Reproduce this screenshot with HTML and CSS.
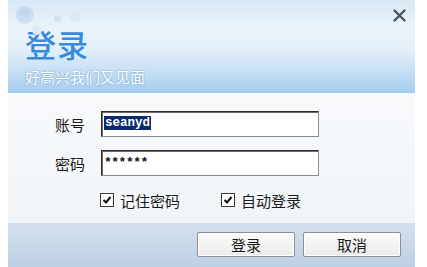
FILE: index.html
```html
<!DOCTYPE html>
<html>
<head>
<meta charset="utf-8">
<link rel="stylesheet" href="styles.css">
</head>
<body>
<div class="window">
  <div class="header">
    <span class="bubble b1"></span>
    <span class="bubble b2"></span>
    <span class="bubble b3"></span>
    <span class="bubble b4"></span>
    <div class="close">
      <svg width="13" height="13" viewBox="0 0 13 13"><path d="M1.5 1.5 L11.5 11.5 M11.5 1.5 L1.5 11.5" stroke="#4a5560" stroke-width="2.4" stroke-linecap="round"/></svg>
    </div>
    <div class="title">登录</div>
    <div class="subtitle">好高兴我们又见面</div>
  </div>
  <div class="body">
    <div class="row">
      <span class="label">账号</span>
      <div class="input"><span class="sel">seanyd</span></div>
    </div>
    <div class="row row2">
      <span class="label">密码</span>
      <div class="input"><span class="pw">******</span></div>
    </div>
    <div class="checks">
      <label class="check"><span class="box"><svg width="12" height="12" viewBox="0 0 12 12"><path d="M2.5 6 L5 8.5 L9.5 3" stroke="#111" stroke-width="2" fill="none"/></svg></span>记住密码</label>
      <label class="check c2"><span class="box"><svg width="12" height="12" viewBox="0 0 12 12"><path d="M2.5 6 L5 8.5 L9.5 3" stroke="#111" stroke-width="2" fill="none"/></svg></span>自动登录</label>
    </div>
  </div>
  <div class="footer">
    <button class="btn">登录</button>
    <button class="btn">取消</button>
  </div>
</div>
</body>
</html>
```

FILE: styles.css
```css
html, body {
  margin: 0;
  padding: 0;
  background: #ffffff;
  height: 267px;
  overflow: hidden;
}
body {
  font-family: "Noto Sans CJK SC", "Liberation Sans", sans-serif;
}
.window {
  margin-left: 8px;
  width: 407px;
  height: 267px;
  display: flex;
  flex-direction: column;
  background: #f4f6f9;
}
.header {
  position: relative;
  height: 93px;
  padding-left: 17px;
  box-sizing: border-box;
  background: linear-gradient(to bottom, #d9e9f6 0%, #eaf3fa 30%, #e6f1fa 50%, #c9e1f5 75%, #a4ccee 100%);
  overflow: hidden;
}
.bubble {
  position: absolute;
  border-radius: 50%;
}
.b1 { left: 8px; top: 6px; width: 18px; height: 18px; background: radial-gradient(circle at 50% 30%, #bcd3ee, #d8e6f5); }
.b2 { left: 46px; top: 15px; width: 7px; height: 7px; background: #d2e2f2; }
.b3 { left: 62px; top: 12px; width: 10px; height: 10px; background: #dbe8f5; }
.b4 { left: 24px; top: 25px; width: 10px; height: 10px; background: #dfeaf6; }
.close {
  position: absolute;
  right: 9px;
  top: 9px;
  width: 13px;
  height: 13px;
}
.close svg { display: block; }
.title {
  margin-top: 24px;
  font-size: 31px;
  font-weight: 500;
  line-height: 40px;
  height: 40px;
  color: #378bdc;
  letter-spacing: 1px;
}
.subtitle {
  margin-top: 4px;
  font-size: 15px;
  line-height: 18px;
  color: #ffffff;
  text-shadow: 0 0 2px #7faad4, 0 0 1px #6f9fcf;
}
.body {
  flex: 1;
  padding-top: 18px;
  box-sizing: border-box;
  background: linear-gradient(to bottom, #f7f9fb, #f2f5f8);
}
.row {
  display: flex;
  align-items: center;
  height: 26px;
}
.row2 { margin-top: 13px; }
.label {
  width: 46px;
  padding-left: 47px;
  font-size: 15px;
  color: #1a1a1a;
}
.input {
  width: 218px;
  height: 26px;
  box-sizing: border-box;
  border: 1px solid #2b2b2b;
  border-right-color: #8a8a8a;
  border-bottom-color: #8a8a8a;
  box-shadow: inset 1px 1px 0 #6b6b6b;
  background: #fff;
  display: flex;
  align-items: center;
  padding-left: 2px;
}
.sel {
  background: #0c2a6e;
  color: #fff;
  font-family: "Liberation Mono", monospace;
  font-weight: bold;
  font-size: 12.5px;
  line-height: 14px;
  padding: 0 1px;
  margin-top: -3px;
}
.pw {
  font-family: "Liberation Mono", monospace;
  font-size: 13px;
  font-weight: bold;
  color: #111;
  letter-spacing: -0.5px;
  margin-top: -2px;
}
.checks {
  display: flex;
  margin-top: 16px;
  padding-left: 92px;
  height: 16px;
  align-items: center;
}
.check {
  display: flex;
  align-items: center;
  font-size: 15px;
  color: #1a1a1a;
}
.c2 { margin-left: 41px; }
.box {
  width: 14px;
  height: 14px;
  box-sizing: border-box;
  border: 1px solid #3a3a3a;
  background: #fff;
  margin-right: 6px;
  display: flex;
  align-items: center;
  justify-content: center;
}
.box svg { display: block; }
.footer {
  height: 44px;
  flex-shrink: 0;
  background: linear-gradient(to bottom, #d3e1ee, #bdd0e2);
  display: flex;
  justify-content: flex-end;
  align-items: flex-start;
  padding-top: 9px;
  padding-right: 14px;
  box-sizing: border-box;
  gap: 8px;
}
.btn {
  width: 98px;
  height: 25px;
  border: 1px solid #8c9095;
  border-radius: 2px;
  background: linear-gradient(to bottom, #fbfbfb, #ebebeb);
  box-shadow: inset 0 0 0 1px #ffffff;
  font-family: "Noto Sans CJK SC", sans-serif;
  font-size: 15px;
  color: #1a1a1a;
  padding: 0;
  line-height: 22px;
}
```
